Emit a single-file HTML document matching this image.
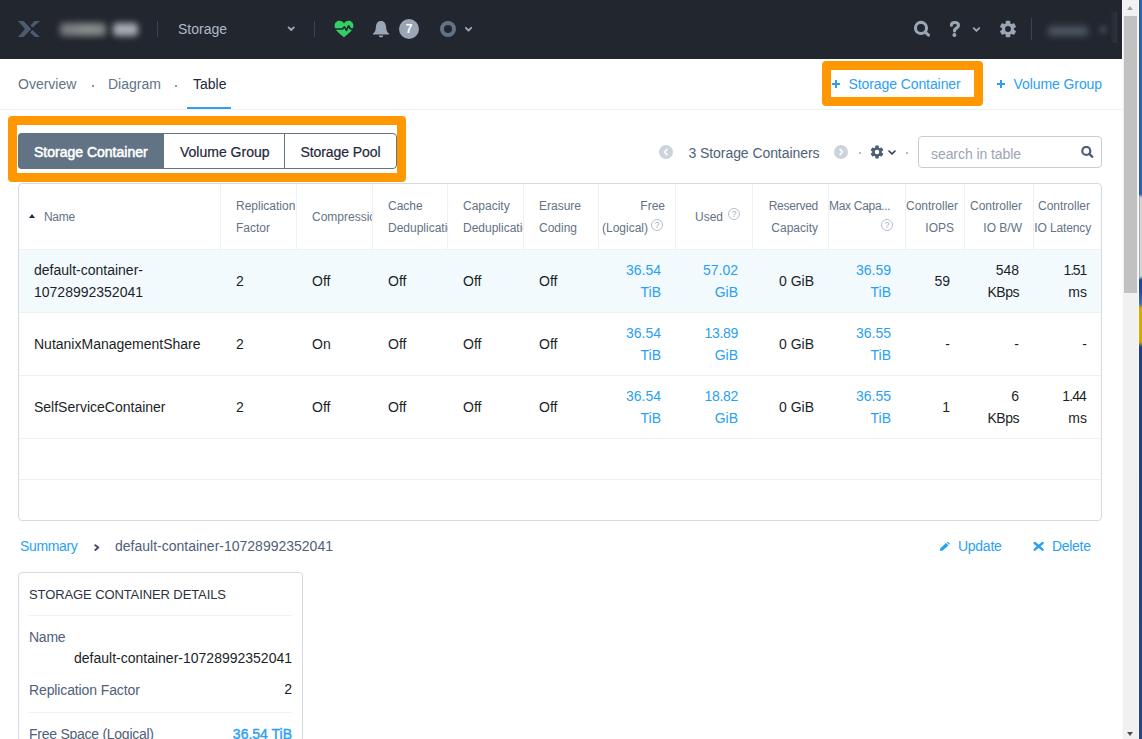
<!DOCTYPE html>
<html>
<head>
<meta charset="utf-8">
<title>Storage</title>
<style>
*{box-sizing:border-box;margin:0;padding:0}
html,body{width:1142px;height:739px;overflow:hidden;background:#fff}
body{font-family:"Liberation Sans",sans-serif;font-size:14px;color:#1b1f27;position:relative}
.a{position:absolute}
.t{position:absolute;white-space:nowrap;line-height:22px;height:22px}
.r{text-align:right}
.sl{color:#627386}
.bl{color:#2a9ff3}
.dk{color:#1b1f27}
.h{font-size:12px;color:#627386}
#top{left:0;top:0;width:1122px;height:59px;background:#22272f}
.vs{position:absolute;width:1px;background:#3b4452}
.cs{position:absolute;top:184px;width:1px;height:65px;background:#eef0f3}
.rl{position:absolute;left:19px;width:1082px;height:1px;background:#eef1f4}
.q{position:absolute;width:12px;height:12px;border:1px solid #b4becb;border-radius:50%;color:#a4afbd;font-size:9px;line-height:10px;text-align:center}
</style>
</head>
<body>
<!-- TOP BAR -->
<div class="a" id="top"></div>

<!-- X logo -->
<svg class="a" style="left:18px;top:21px" width="22" height="16" viewBox="0 0 22 16">
<polygon points="0,0 5.5,0 13.2,7.9 5.5,16 0,16 7,7.9" fill="#4c5b6e"/><polygon points="16.7,0 22,0 14.6,6.6 12.4,4.5" fill="#4c5b6e"/><polygon points="14.3,9.1 12,11.4 17.1,16 22,16" fill="#4c5b6e"/>
</svg>
<!-- blurred cluster name -->
<div class="a" style="left:60px;top:23px;width:46px;height:13px;border-radius:4px;background:linear-gradient(90deg,#75737b,#868e8b 60%,#7a807f);filter:blur(3.2px)"></div><div class="a" style="left:113px;top:23px;width:25px;height:13px;border-radius:4px;background:#a6abb1;filter:blur(3.2px)"></div>
<div class="vs" style="left:157px;top:21px;height:16px"></div>
<div class="t" style="left:178px;top:18px;color:#aeb9c9">Storage</div>
<svg class="a" style="left:287px;top:26px" width="8" height="6" viewBox="0 0 8 6"><polyline points="1.6,1.4 4.2,4 6.8,1.4" fill="none" stroke="#9aa5b5" stroke-width="1.85" stroke-linecap="round" stroke-linejoin="round"/></svg>
<div class="vs" style="left:314px;top:21px;height:16px"></div>
<!-- heart -->
<svg class="a" style="left:334px;top:20px" width="20" height="18" viewBox="0 0 20 18">
<path d="M10 17.2 C 4 12.6 0.6 9.6 0.6 5.8 C 0.6 2.8 2.9 0.8 5.5 0.8 C 7.4 0.8 9 1.8 10 3.4 C 11 1.8 12.6 0.8 14.5 0.8 C 17.1 0.8 19.4 2.8 19.4 5.8 C 19.4 9.6 16 12.6 10 17.2 Z" fill="#31cf65"/>
<polyline points="0,9 8.4,9 10.4,6.8 12.4,10.4 14.6,5.8 16.6,9 20,9" fill="none" stroke="#22272f" stroke-width="1.7" stroke-linejoin="round" stroke-linecap="butt"/>
</svg>
<!-- bell -->
<svg class="a" style="left:372px;top:20px" width="18" height="18" viewBox="0 0 18 18">
<path d="M9 0.9 C 12.4 0.9 13.9 3.6 14.1 7 C 14.3 10.4 15 12.2 17 13.6 L 17 14.5 L 1 14.5 L 1 13.6 C 3 12.2 3.7 10.4 3.9 7 C 4.1 3.6 5.6 0.9 9 0.9 Z" fill="#9aa5b5"/>
<path d="M6.8 15.4 L 11.2 15.4 C 11.2 16.6 10.2 17.4 9 17.4 C 7.8 17.4 6.8 16.6 6.8 15.4 Z" fill="#9aa5b5"/>
</svg>
<div class="a" style="left:399px;top:19px;width:20px;height:20px;border-radius:50%;background:#9aa5b5;color:#fff;font-size:12px;font-weight:bold;text-align:center;line-height:21px">7</div>
<div class="a" style="left:440px;top:21px;width:16px;height:16px;border-radius:50%;border:4px solid #627386"></div>
<svg class="a" style="left:465px;top:26px" width="8" height="6" viewBox="0 0 8 6"><polyline points="0.8,1.8 3.5,4.5 6.2,1.8" fill="none" stroke="#9aa5b5" stroke-width="1.85" stroke-linecap="round" stroke-linejoin="round"/></svg>
<!-- right icons -->
<svg class="a" style="left:913px;top:20px" width="18" height="18" viewBox="0 0 18 18">
<circle cx="8" cy="7.9" r="5.55" fill="none" stroke="#9aa5b5" stroke-width="3.1"/>
<line x1="12.2" y1="12.1" x2="15.5" y2="15.2" stroke="#9aa5b5" stroke-width="3" stroke-linecap="round"/>
</svg>
<svg class="a" style="left:949px;top:20px" width="12" height="18" viewBox="0 0 12 18">
<path d="M2.4 5.2 C2.4 3.2 3.9 2.5 5.7 2.5 C7.8 2.5 9.5 3.5 9.5 5.5 C9.5 7.9 5.5 7.9 5.5 10.9" fill="none" stroke="#9aa5b5" stroke-width="3.1" stroke-linecap="round" stroke-linejoin="round"/>
<circle cx="5.4" cy="14.9" r="2" fill="#9aa5b5"/>
</svg>
<svg class="a" style="left:972px;top:26px" width="9" height="6" viewBox="0 0 9 6"><polyline points="1.7,2.1 4.45,4.9 7.2,2.1" fill="none" stroke="#9aa5b5" stroke-width="1.85" stroke-linecap="round" stroke-linejoin="round"/></svg>
<!-- gear -->
<svg class="a" style="left:999px;top:20px" width="18" height="18" viewBox="-9 -9 18 18">
<g fill="#9aa5b5">
<rect x="-2.3" y="-8.2" width="4.6" height="16.4" rx="0.8"/>
<rect x="-2.3" y="-8.2" width="4.6" height="16.4" rx="0.8" transform="rotate(60)"/>
<rect x="-2.3" y="-8.2" width="4.6" height="16.4" rx="0.8" transform="rotate(120)"/>
<circle r="6.1"/>
</g>
<circle r="2.9" fill="#22272f"/>
</svg>
<div class="vs" style="left:1031px;top:18px;height:22px"></div>
<div class="a" style="left:1048px;top:26px;width:40px;height:10px;border-radius:4px;background:#4c5560;filter:blur(3.2px)"></div>
<div class="a" style="left:1099px;top:26px;width:8px;height:7px;border-radius:50%;background:#404852;filter:blur(2.4px)"></div>
<div class="a" style="left:1111px;top:12px;width:6px;height:31px;background:linear-gradient(90deg,#262b33,#2b3038 70%,#31363e);filter:blur(0.5px)"></div>


<!-- SUBNAV -->
<div class="t sl" style="left:18px;top:73px">Overview</div>
<div class="a" style="left:91.5px;top:84.5px;width:2px;height:2px;border-radius:50%;background:#627386"></div>
<div class="t sl" style="left:108px;top:73px">Diagram</div>
<div class="a" style="left:175.3px;top:84.5px;width:2px;height:2px;border-radius:50%;background:#627386"></div>
<div class="t" style="left:193px;top:73px;color:#22283a">Table</div>
<div class="a" style="left:187px;top:107px;width:44px;height:2px;background:#2f9ff2"></div>
<div class="a" style="left:0;top:109px;width:1122px;height:1px;background:#eff0f2"></div>

<!-- TOP RIGHT ACTIONS -->
<div class="a" style="left:822px;top:61px;width:161px;height:45px;border:9px solid #ff9800;border-radius:4px"></div>
<div class="a" style="left:832px;top:83px;width:8px;height:2px;background:#2a9ff3"></div><div class="a" style="left:835px;top:80px;width:2px;height:8px;background:#2a9ff3"></div>
<div class="t bl" style="left:848.5px;top:73px;letter-spacing:-0.09px">Storage Container</div>
<div class="a" style="left:997px;top:83px;width:8px;height:2px;background:#2a9ff3"></div><div class="a" style="left:1000px;top:80px;width:2px;height:8px;background:#2a9ff3"></div>
<div class="t bl" style="left:1013.5px;top:73px;letter-spacing:-0.08px">Volume Group</div>

<!-- TABS -->
<div class="a" style="left:8px;top:116px;width:398px;height:66px;border:9px solid #ff9800;border-radius:4px"></div>
<div class="a" style="left:18px;top:133px;width:379px;height:36px;border:1px solid #627386;border-radius:4px;background:#fff"></div>
<div class="a" style="left:18px;top:133px;width:146px;height:36px;background:#627386;border-radius:4px 0 0 4px"></div>
<div class="a" style="left:284px;top:133px;width:1px;height:36px;background:#627386"></div>
<div class="t" style="left:34px;top:141px;font-size:14px;-webkit-text-stroke:0.55px #fff;color:#fff">Storage Container</div>
<div class="t" style="left:180px;top:141px;font-size:14px;-webkit-text-stroke:0.2px #22283a;color:#22283a">Volume Group</div>
<div class="t" style="left:300.5px;top:141px;font-size:14px;-webkit-text-stroke:0.2px #22283a;color:#22283a;letter-spacing:-0.08px">Storage Pool</div>

<!-- TABLE TOOLBAR -->

<div class="a" style="left:659px;top:145px;width:14px;height:14px;border-radius:50%;background:#cdd3db"></div>
<svg class="a" style="left:659px;top:145px" width="14" height="14" viewBox="0 0 14 14"><polyline points="8,4.4 5.4,7 8,9.6" fill="none" stroke="#fff" stroke-width="1.5" stroke-linecap="round" stroke-linejoin="round"/></svg>
<div class="t" style="left:688.5px;top:142px;color:#4f6078;letter-spacing:-0.07px">3 Storage Containers</div>
<div class="a" style="left:834px;top:145px;width:14px;height:14px;border-radius:50%;background:#cdd3db"></div>
<svg class="a" style="left:834px;top:145px" width="14" height="14" viewBox="0 0 14 14"><polyline points="6,4.4 8.6,7 6,9.6" fill="none" stroke="#fff" stroke-width="1.5" stroke-linecap="round" stroke-linejoin="round"/></svg>
<div class="a" style="left:859px;top:152px;width:2px;height:2px;border-radius:50%;background:#9aa5b5"></div>
<svg class="a" style="left:870px;top:145px" width="14" height="14" viewBox="-9 -9 18 18">
<g fill="#4b5f78">
<rect x="-2.3" y="-8.2" width="4.6" height="16.4" rx="0.8"/>
<rect x="-2.3" y="-8.2" width="4.6" height="16.4" rx="0.8" transform="rotate(60)"/>
<rect x="-2.3" y="-8.2" width="4.6" height="16.4" rx="0.8" transform="rotate(120)"/>
<circle r="6.1"/>
</g>
<circle r="2.9" fill="#fff"/>
</svg>
<svg class="a" style="left:888px;top:150px" width="8" height="6" viewBox="0 0 8 6"><polyline points="1,1 4,4 7,1" fill="none" stroke="#2f3a4d" stroke-width="1.6" stroke-linecap="round" stroke-linejoin="round"/></svg>
<div class="a" style="left:906px;top:152px;width:2px;height:2px;border-radius:50%;background:#9aa5b5"></div>
<div class="a" style="left:918px;top:136px;width:184px;height:32px;border:1px solid #cccccc;border-radius:4px;background:#fff"></div>
<div class="t" style="left:931px;top:143px;color:#9aa5b5;letter-spacing:-0.07px">search in table</div>
<svg class="a" style="left:1080px;top:146px" width="14" height="13" viewBox="0 0 14 13">
<circle cx="6.3" cy="4.9" r="4" fill="none" stroke="#4b5f78" stroke-width="2.2"/>
<line x1="9.3" y1="7.9" x2="12.3" y2="10.8" stroke="#4b5f78" stroke-width="2.3" stroke-linecap="round"/>
</svg>


<!-- TABLE -->
<div class="a" style="left:18px;top:183px;width:1084px;height:338px;border:1px solid #d6dbe3;border-radius:4px"></div>
<div class="a" style="left:19px;top:249px;width:1082px;height:64px;background:#f2fafe"></div>
<div class="cs" style="left:220px"></div>
<div class="cs" style="left:296px"></div>
<div class="cs" style="left:372px"></div>
<div class="cs" style="left:447px"></div>
<div class="cs" style="left:523px"></div>
<div class="cs" style="left:598px"></div>
<div class="cs" style="left:675px"></div>
<div class="cs" style="left:752px"></div>
<div class="cs" style="left:828px"></div>
<div class="cs" style="left:905px"></div>
<div class="cs" style="left:964px"></div>
<div class="cs" style="left:1033px"></div>
<div class="rl" style="top:249px"></div>
<div class="rl" style="top:312px"></div>
<div class="rl" style="top:375px"></div>
<div class="rl" style="top:438px"></div>
<div class="rl" style="top:479px"></div>
<div class="a" style="left:29px;top:214px;width:0;height:0;border-left:3px solid transparent;border-right:3px solid transparent;border-bottom:4px solid #22283a"></div>
<div class="t h" style="left:44px;top:206px;letter-spacing:-0.3px">Name</div>
<div class="t h" style="left:236px;top:195px">Replication</div>
<div class="t h" style="left:236px;top:217px">Factor</div>
<div class="t h" style="left:312px;top:206px;width:60px;overflow:hidden">Compression</div>
<div class="t h" style="left:388px;top:195px">Cache</div>
<div class="t h" style="left:388px;top:217px;width:60px;overflow:hidden">Deduplication</div>
<div class="t h" style="left:463px;top:195px">Capacity</div>
<div class="t h" style="left:463px;top:217px;width:60px;overflow:hidden">Deduplication</div>
<div class="t h" style="left:539px;top:195px">Erasure</div>
<div class="t h" style="left:539px;top:217px">Coding</div>
<div class="t h r" style="right:477px;top:195px">Free</div>
<div class="t h" style="left:602px;top:217px">(Logical)</div>
<div class="q" style="left:651px;top:219px">?</div>
<div class="t h" style="left:695px;top:206px">Used</div>
<div class="q" style="left:728px;top:208px">?</div>
<div class="t h r" style="right:324px;top:195px;letter-spacing:-0.25px">Reserved</div>
<div class="t h r" style="right:324px;top:217px">Capacity</div>
<div class="t h" style="left:829px;top:195px;letter-spacing:-0.3px">Max Capa...</div>
<div class="q" style="left:881px;top:219px">?</div>
<div class="t h" style="left:906px;top:195px">Controller</div>
<div class="t h r" style="right:188px;top:217px">IOPS</div>
<div class="t h" style="left:970px;top:195px">Controller</div>
<div class="t h r" style="right:120px;top:217px">IO B/W</div>
<div class="t h" style="left:1038px;top:195px">Controller</div>
<div class="t h r" style="right:51px;top:217px;letter-spacing:-0.13px">IO Latency</div>
<div class="t dk" style="left:34px;top:259px">default-container-</div>
<div class="t dk" style="left:34px;top:281px">10728992352041</div>
<div class="t dk" style="left:236px;top:270px">2</div>
<div class="t dk" style="left:312px;top:270px">Off</div>
<div class="t dk" style="left:388px;top:270px">Off</div>
<div class="t dk" style="left:463px;top:270px">Off</div>
<div class="t dk" style="left:539px;top:270px">Off</div>
<div class="t bl r" style="right:481px;top:259px">36.54</div>
<div class="t bl r" style="right:481px;top:281px">TiB</div>
<div class="t bl r" style="right:404px;top:259px">57.02</div>
<div class="t bl r" style="right:404px;top:281px">GiB</div>
<div class="t dk r" style="right:328px;top:270px">0 GiB</div>
<div class="t bl r" style="right:251px;top:259px">36.59</div>
<div class="t bl r" style="right:251px;top:281px">TiB</div>
<div class="t dk r" style="right:192px;top:270px">59</div>
<div class="t dk r" style="right:123px;top:259px">548</div>
<div class="t dk r" style="right:123px;top:281px;letter-spacing:-0.5px">KBps</div>
<div class="t dk r" style="right:56px;top:259px;letter-spacing:-1.2px">1.51</div>
<div class="t dk r" style="right:55px;top:281px">ms</div>
<div class="t dk" style="left:34px;top:333px">NutanixManagementShare</div>
<div class="t dk" style="left:236px;top:333px">2</div>
<div class="t dk" style="left:312px;top:333px">On</div>
<div class="t dk" style="left:388px;top:333px">Off</div>
<div class="t dk" style="left:463px;top:333px">Off</div>
<div class="t dk" style="left:539px;top:333px">Off</div>
<div class="t bl r" style="right:481px;top:322px">36.54</div>
<div class="t bl r" style="right:481px;top:344px">TiB</div>
<div class="t bl r" style="right:404px;top:322px;letter-spacing:-0.3px">13.89</div>
<div class="t bl r" style="right:404px;top:344px">GiB</div>
<div class="t dk r" style="right:328px;top:333px">0 GiB</div>
<div class="t bl r" style="right:251px;top:322px">36.55</div>
<div class="t bl r" style="right:251px;top:344px">TiB</div>
<div class="t dk r" style="right:192px;top:333px">-</div>
<div class="t dk r" style="right:123px;top:333px">-</div>
<div class="t dk r" style="right:55px;top:333px">-</div>
<div class="t dk" style="left:34px;top:396px">SelfServiceContainer</div>
<div class="t dk" style="left:236px;top:396px">2</div>
<div class="t dk" style="left:312px;top:396px">Off</div>
<div class="t dk" style="left:388px;top:396px">Off</div>
<div class="t dk" style="left:463px;top:396px">Off</div>
<div class="t dk" style="left:539px;top:396px">Off</div>
<div class="t bl r" style="right:481px;top:385px">36.54</div>
<div class="t bl r" style="right:481px;top:407px">TiB</div>
<div class="t bl r" style="right:404px;top:385px;letter-spacing:-0.3px">18.82</div>
<div class="t bl r" style="right:404px;top:407px">GiB</div>
<div class="t dk r" style="right:328px;top:396px">0 GiB</div>
<div class="t bl r" style="right:251px;top:385px">36.55</div>
<div class="t bl r" style="right:251px;top:407px">TiB</div>
<div class="t dk r" style="right:192px;top:396px">1</div>
<div class="t dk r" style="right:123px;top:385px">6</div>
<div class="t dk r" style="right:123px;top:407px;letter-spacing:-0.5px">KBps</div>
<div class="t dk r" style="right:56px;top:385px;letter-spacing:-0.9px">1.44</div>
<div class="t dk r" style="right:55px;top:407px">ms</div>

<!-- SUMMARY -->

<div class="t bl" style="left:20px;top:535px;letter-spacing:-0.35px">Summary</div>
<svg class="a" style="left:93.7px;top:544px" width="6" height="8" viewBox="0 0 6 8"><polyline points="1.3,1.2 4.3,3.55 1.3,5.9" fill="none" stroke="#3b4b66" stroke-width="1.9" stroke-linecap="round" stroke-linejoin="round"/></svg>
<div class="t" style="left:115px;top:535px;color:#4f6078">default-container-10728992352041</div>
<!-- update / delete -->
<svg class="a" style="left:939px;top:541px" width="12" height="11" viewBox="0 0 12 11">
<polygon points="0.8,10 1.5,7.3 7.0,2.1 9.4,4.5 3.7,9.6" fill="#24a0f5"/>
<polygon points="7.8,1.4 8.8,0.7 10.9,2.7 10.1,3.8" fill="#24a0f5"/>
</svg>
<div class="t bl" style="left:958px;top:535px;letter-spacing:-0.27px">Update</div>
<svg class="a" style="left:1033px;top:541px" width="12" height="11" viewBox="0 0 12 11"><path d="M1.7 2 L9.6 8.7 M9.6 2 L1.7 8.7" stroke="#24a0f5" stroke-width="2.4" stroke-linecap="round"/></svg>
<div class="t bl" style="left:1052px;top:535px;letter-spacing:-0.3px">Delete</div>
<!-- card -->
<div class="a" style="left:18px;top:572px;width:285px;height:200px;border:1px solid #d6dbe3;border-radius:4px"></div>
<div class="t" style="left:29px;top:584px;font-size:13px;color:#2b3242;letter-spacing:-0.1px">STORAGE CONTAINER DETAILS</div>
<div class="a" style="left:29px;top:615px;width:263px;height:1px;background:#eff1f4"></div>
<div class="t" style="left:29px;top:626px;color:#4f6078;letter-spacing:-0.25px">Name</div>
<div class="t r dk" style="right:850px;top:647px">default-container-10728992352041</div>
<div class="t" style="left:29px;top:679px;color:#4f6078;letter-spacing:-0.12px">Replication Factor</div>
<div class="t r dk" style="right:850px;top:678px">2</div>
<div class="a" style="left:29px;top:712px;width:263px;height:1px;background:#eff1f4"></div>
<div class="t" style="left:29px;top:723px;color:#4f6078;letter-spacing:-0.26px">Free Space (Logical)</div>
<div class="t r bl" style="right:850px;top:723px;-webkit-text-stroke:0.4px #2f9ff2">36.54 TiB</div>


<!-- SCROLLBAR -->

<div class="a" style="left:1122px;top:0;width:17px;height:739px;background:#f1f1f1"></div>
<div class="a" style="left:1122px;top:0;width:1px;height:739px;background:#fafafa"></div>
<div class="a" style="left:1124px;top:16px;width:13px;height:277px;background:#c1c1c1"></div>
<div class="a" style="left:1127px;top:6px;width:0;height:0;border-left:3.5px solid transparent;border-right:3.5px solid transparent;border-bottom:4px solid #a3a3a3"></div>
<div class="a" style="left:1127px;top:732px;width:0;height:0;border-left:3.5px solid transparent;border-right:3.5px solid transparent;border-top:4px solid #505050"></div>
<div class="a" style="left:1138px;top:0;width:1px;height:739px;background:#fbfbfb"></div>
<!-- desktop strip -->
<div class="a" style="left:1139px;top:0;width:3px;height:739px;background:linear-gradient(to bottom,#2566bd 0,#2566bd 194px,#d5d8d8 198px,#d5d8d8 266px,#c8dcdf 276px,#1b4594 280px,#1f4a9c 290px,#3d6fc0 304px,#d9a800 308px,#d9a800 342px,#1d3f8c 347px,#22458f 739px)"></div>
<div class="a" style="left:1139px;top:0;width:1px;height:195px;background:#2f5a9c"></div>
<div class="a" style="left:1139px;top:197px;width:1px;height:81px;background:#a8a8a8"></div>

</body>
</html>
